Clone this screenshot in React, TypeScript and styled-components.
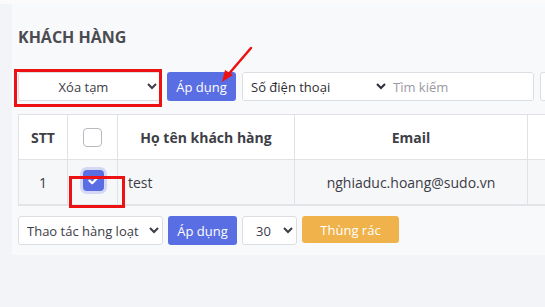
import styled, { createGlobalStyle } from "styled-components";

const GlobalStyle = createGlobalStyle`
    html, body {
        margin: 0;
        padding: 0;
        background: #f3f4f7;
        overflow: hidden;
        font-family: "Open Sans", "Noto Sans", sans-serif;
        color: #3c3c46;
    }
`;

const Page = styled.div`
    position: relative;
    width: 545px;
    height: 307px;
    box-sizing: border-box;
    border-top: 4px solid #fbfbfc;
`;

const Card = styled.div`
    margin-left: 12px;
    width: 700px;
    background: #f8f9fb;
    padding: 22px 0 10px 6px;
    display: flex;
    flex-direction: column;
`;

const Title = styled.h2`
    margin: 0 0 24px 0;
    font-size: 16px;
    line-height: 22px;
    font-weight: 700;
    color: #4b4b52;
`;

const Toolbar = styled.div<{ $gap: number }>`
    display: flex;
    align-items: center;
    gap: ${p => p.$gap}px;
`;

const Select = styled.select<{ $w: number; $center?: boolean }>`
    width: ${p => p.$w}px;
    height: 29px;
    border: 1px solid #dcdde2;
    border-radius: 3px;
    background: #fff;
    font-family: inherit;
    font-size: 13px;
    color: #3c3c46;
    padding: 0 4px;
    text-align-last: ${p => (p.$center ? "center" : "left")};
    outline: none;
`;

const Button = styled.button<{ $color: string }>`
    height: 29px;
    width: 69px;
    border: none;
    border-radius: 3px;
    background: ${p => p.$color};
    color: #fff;
    font-family: inherit;
    font-size: 13px;
    padding: 0;
`;

const TrashButton = styled(Button)`
    width: 97px;
    height: 27px;
    align-self: flex-start;
`;

const SearchGroup = styled.div`
    display: flex;
    align-items: center;
    width: 292px;
    height: 29px;
    border: 1px solid #dcdde2;
    border-radius: 3px;
    background: #fff;
    box-sizing: border-box;
    overflow: hidden;
`;

const GroupSelect = styled.select`
    width: 146px;
    height: 100%;
    border: none;
    background: #fff;
    font-family: inherit;
    font-size: 13px;
    color: #2d2d35;
    padding: 0 4px;
    outline: none;
`;

const SearchInput = styled.input`
    flex: 1;
    min-width: 0;
    height: 100%;
    border: none;
    font-family: inherit;
    font-size: 13px;
    padding: 0 4px;
    outline: none;
    &::placeholder { color: #9a9aa2; }
`;

const GhostBox = styled.div`
    width: 60px;
    height: 29px;
    border: 1px solid #dcdde2;
    border-radius: 3px;
    background: #fff;
    box-sizing: border-box;
`;

const Table = styled.table`
    margin: 13px 0 10px 0;
    border-collapse: collapse;
    width: 675px;
    table-layout: fixed;
    font-size: 14px;
`;

const Th = styled.th<{ $w: number }>`
    width: ${p => p.$w}px;
    height: 44px;
    background: #fff;
    border: 1px solid #e1e2e6;
    font-weight: 700;
    color: #3e3e46;
    text-align: center;
    padding: 0;
`;

const Td = styled.td<{ $align?: string }>`
    height: 44px;
    background: #f6f7f9;
    border: 1px solid #e1e2e6;
    border-bottom: 2px solid #e3e4e8;
    text-align: ${p => p.$align || "center"};
    padding: 0 ${p => (p.$align === "left" ? "10px" : "0")};
    color: #3c3c46;
`;

const Box = styled.span<{ $checked?: boolean }>`
    display: inline-flex;
    align-items: center;
    justify-content: center;
    vertical-align: middle;
    box-sizing: border-box;
    width: ${p => (p.$checked ? 21 : 19)}px;
    height: ${p => (p.$checked ? 21 : 19)}px;
    margin: ${p => (p.$checked ? "0 0 4px 2px" : "0")};
    border-radius: 4px;
    border: ${p => (p.$checked ? "none" : "1px solid #b9bac0")};
    background: ${p => (p.$checked ? "#5a6ee4" : "#fff")};
    box-shadow: ${p => (p.$checked ? "0 0 0 3px rgba(90,110,228,0.22)" : "none")};
`;

const Highlight = styled.div<{ $x: number; $y: number; $w: number; $h: number }>`
    position: absolute;
    left: ${p => p.$x}px;
    top: ${p => p.$y}px;
    width: ${p => p.$w}px;
    height: ${p => p.$h}px;
    border: 3px solid #ee1111;
    box-sizing: border-box;
    pointer-events: none;
`;

const Arrow = styled.svg`
    position: absolute;
    left: 215px;
    top: 38px;
    overflow: visible;
`;

const App = () =>
{
    return (
        <>
            <GlobalStyle />
            <Page>
                <Card>
                    <Title>KHÁCH HÀNG</Title>
                    <Toolbar $gap={6}>
                        <Select $w={143} $center defaultValue="tam">
                            <option value="tam">Xóa tạm</option>
                        </Select>
                        <Button $color="#5a6ee4">Áp dụng</Button>
                        <SearchGroup>
                            <GroupSelect defaultValue="sdt">
                                <option value="sdt">Số điện thoại</option>
                            </GroupSelect>
                            <SearchInput placeholder="Tìm kiếm" />
                        </SearchGroup>
                        <GhostBox />
                    </Toolbar>
                    <Table>
                        <thead>
                            <tr>
                                <Th $w={48}>STT</Th>
                                <Th $w={49}><Box /></Th>
                                <Th $w={176}>Họ tên khách hàng</Th>
                                <Th $w={232}>Email</Th>
                                <Th $w={170}></Th>
                            </tr>
                        </thead>
                        <tbody>
                            <tr>
                                <Td>1</Td>
                                <Td>
                                    <Box $checked>
                                        <svg width="11" height="9" viewBox="0 0 11 9">
                                            <path d="M1.5 4.6 L4.2 7.2 L9.5 1.8" fill="none" stroke="#fff" strokeWidth="2.2" strokeLinecap="round" strokeLinejoin="round" />
                                        </svg>
                                    </Box>
                                </Td>
                                <Td $align="left">test</Td>
                                <Td>nghiaduc.hoang@sudo.vn</Td>
                                <Td></Td>
                            </tr>
                        </tbody>
                    </Table>
                    <Toolbar $gap={5}>
                        <Select $w={145} defaultValue="bulk">
                            <option value="bulk">Thao tác hàng loạt</option>
                        </Select>
                        <Button $color="#5a6ee4">Áp dụng</Button>
                        <Select $w={55} $center defaultValue="30">
                            <option value="30">30</option>
                        </Select>
                        <TrashButton $color="#f0b24a">Thùng rác</TrashButton>
                    </Toolbar>
                </Card>
                <Highlight $x={14} $y={65} $w={148} $h={38} />
                <Highlight $x={69} $y={172} $w={56} $h={32} />
                <Arrow width="40" height="45">
                    <line x1="36" y1="6" x2="12" y2="34" stroke="#ee1111" strokeWidth="2.5" strokeLinecap="round" />
                    <polygon points="7,40 10,28 18,33" fill="#ee1111" />
                </Arrow>
            </Page>
        </>
    );
}

export default App;
